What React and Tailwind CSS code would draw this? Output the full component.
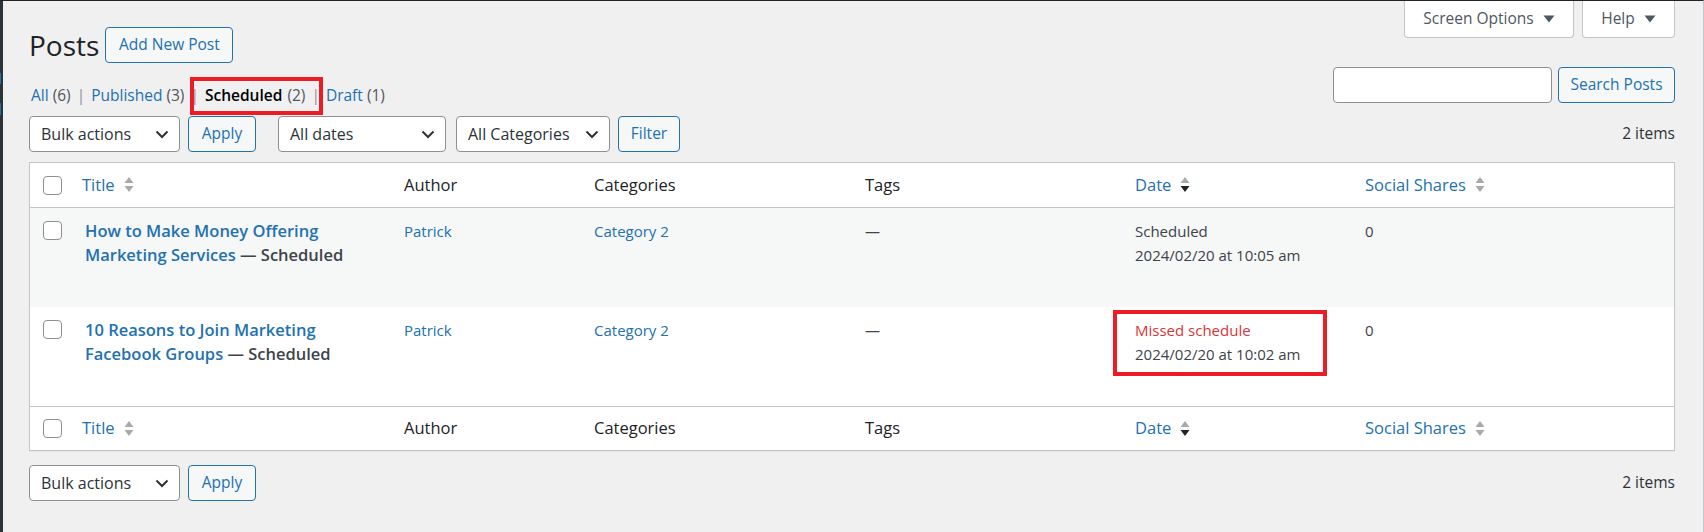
import React from 'react';

const font = { fontFamily: '"Open Sans", "Noto Sans", Arial, sans-serif' };

function SortArrows({ sorted }) {
  return (
    <svg width="10" height="18" viewBox="0 0 10 18" className="ml-[9px] shrink-0">
      <path d="M5 1 L9.5 7 L0.5 7 Z" fill="#a7aaad" />
      <path d="M0.5 10 L9.5 10 L5 16 Z" fill={sorted ? '#1d2327' : '#a7aaad'} />
    </svg>
  );
}

function Chevron() {
  return (
    <svg width="14" height="9" viewBox="0 0 14 9" className="shrink-0">
      <path d="M1.5 1.5 L7 7 L12.5 1.5" fill="none" stroke="#2c3338" strokeWidth="2" />
    </svg>
  );
}

function Caret() {
  return (
    <svg width="12" height="8" viewBox="0 0 12 8" className="shrink-0">
      <path d="M0.5 0.5 L11.5 0.5 L6 7.5 Z" fill="#50575e" />
    </svg>
  );
}

function Select({ label, width }) {
  return (
    <div
      className="h-[36px] flex items-center justify-between pl-[11px] pr-[10px] bg-white border border-[#8c8f94] rounded-[4px] text-[16px] text-[#2c3338]"
      style={{ width }}
    >
      <span>{label}</span>
      <Chevron />
    </div>
  );
}

function Button({ children, className = '' }) {
  return (
    <button
      className={`h-[36px] flex items-center justify-center border border-[#2271b1] bg-[#f6f7f7] rounded-[4px] text-[15.5px] text-[#2271b1] ${className}`}
    >
      {children}
    </button>
  );
}

function Checkbox() {
  return <span className="block w-[19px] h-[19px] bg-white border border-[#8c8f94] rounded-[4px]" />;
}

const cols = 'grid grid-cols-[42px_322px_190px_271px_270px_230px_1fr]';

function HeadRow({ className = '' }) {
  return (
    <div className={`${cols} items-center bg-white text-[16.5px] ${className}`}>
      <div className="pl-[13px]">
        <Checkbox />
      </div>
      <div className="pl-[10px] flex items-center text-[#2271b1]">
        Title
        <SortArrows />
      </div>
      <div className="pl-[10px] text-[#1d2327]">Author</div>
      <div className="pl-[10px] text-[#1d2327]">Categories</div>
      <div className="pl-[10px] text-[#1d2327]">Tags</div>
      <div className="pl-[10px] flex items-center text-[#2271b1]">
        Date
        <SortArrows sorted />
      </div>
      <div className="pl-[10px] flex items-center text-[#2271b1]">
        Social Shares
        <SortArrows />
      </div>
    </div>
  );
}

function PostRow({ title, status, date, missed, striped }) {
  return (
    <div className={`${cols} h-[99px] pt-[11px] text-[15px] leading-[24px] ${striped ? 'bg-[#f6f7f7]' : 'bg-white'}`}>
      <div className="pl-[13px] pt-[2px]">
        <Checkbox />
      </div>
      <div className="pl-[13px] pr-[20px] text-[16.5px] font-semibold">
        <span className="text-[#2271b1]">{title[0]}</span>
        <br />
        <span className="text-[#2271b1]">{title[1]}</span>
        <span className="text-[#3c434a]"> — Scheduled</span>
      </div>
      <div className="pl-[10px] text-[#2271b1]">Patrick</div>
      <div className="pl-[10px] text-[#2271b1]">Category 2</div>
      <div className="pl-[10px] text-[#3c434a]">—</div>
      <div className="pl-[10px] relative text-[#3c434a]">
        <div className={missed ? 'text-[#d63638]' : ''}>{status}</div>
        <div>{date}</div>
        {missed && (
          <div className="absolute left-[-12px] top-[-8px] w-[214px] h-[66px] border-4 border-[#ed1c24]" />
        )}
      </div>
      <div className="pl-[10px] text-[#3c434a]">0</div>
    </div>
  );
}

export default function App() {
  return (
    <div className="w-[1704px] h-[532px] flex bg-[#f0f0f1] border-t border-t-[#1d2327] border-r border-r-[#c3c4c7] overflow-hidden" style={font}>
      <div className="w-[3px] shrink-0 bg-[#2c3338] flex flex-col">
        <div className="h-[72px]" />
        <div className="w-[1px] h-[11px] bg-[#2271b1]" />
        <div className="h-[19px]" />
        <div className="w-[1px] h-[12px] bg-[#2271b1]" />
      </div>

      <div className="flex-1 pl-[26px] pr-[28px]">
        {/* heading + screen meta tabs */}
        <div className="flex justify-between items-start">
          <div className="flex items-center pt-[26px]">
            <h1 className="text-[28px] leading-[36px] text-[#1d2327] mr-[6px]">Posts</h1>
            <Button className="w-[128px]">Add New Post</Button>
          </div>
          <div className="flex gap-[8px]">
            <div className="w-[170px] h-[37px] flex items-center justify-center gap-[9px] bg-white border border-t-0 border-[#c3c4c7] rounded-b-[4px] text-[15.5px] text-[#50575e]">
              Screen Options <Caret />
            </div>
            <div className="w-[93px] h-[37px] flex items-center justify-center gap-[9px] bg-white border border-t-0 border-[#c3c4c7] rounded-b-[4px] text-[15.5px] text-[#50575e]">
              Help <Caret />
            </div>
          </div>
        </div>

        {/* status links + search */}
        <div className="flex justify-between items-start h-[36px] mt-[4px]">
          <div className="flex items-center ml-[2px] mt-[17px] leading-[22px] text-[15.5px] text-[#50575e]">
            <span className="text-[#2271b1]">All <span className="text-[#50575e]">(6)</span></span>
            <span className="mx-[6px] text-[#8c8f94]">|</span>
            <span className="text-[#2271b1]">Published <span className="text-[#50575e]">(3)</span></span>
            <span className="relative flex items-center">
              <span className="mx-[6px] text-[#8c8f94]">|</span>
              <span className="font-semibold text-black">Scheduled</span>
              <span className="ml-[5px]">(2)</span>
              <span className="mx-[6px] text-[#8c8f94]">|</span>
              <span className="absolute left-[6px] right-[3px] top-[-7px] bottom-[-9px] border-4 border-[#ed1c24]" />
            </span>
            <span className="text-[#2271b1]">Draft <span className="text-[#50575e]">(1)</span></span>
          </div>
          <div className="flex gap-[6px]">
            <div className="w-[219px] h-[36px] bg-white border border-[#8c8f94] rounded-[4px]" />
            <Button className="w-[117px]">Search Posts</Button>
          </div>
        </div>

        {/* top tablenav */}
        <div className="flex items-center h-[36px] mt-[13px]">
          <Select label="Bulk actions" width={151} />
          <Button className="w-[68px] ml-[8px]">Apply</Button>
          <div className="ml-[22px]">
            <Select label="All dates" width={168} />
          </div>
          <div className="ml-[10px]">
            <Select label="All Categories" width={154} />
          </div>
          <Button className="w-[62px] ml-[8px]">Filter</Button>
          <span className="ml-auto text-[15.5px] text-[#2c3338]">2 items</span>
        </div>

        {/* list table */}
        <div className="mt-[10px] border border-[#c3c4c7] bg-white shadow-[0_1px_1px_rgba(0,0,0,0.04)]">
          <HeadRow className="h-[45px] border-b border-[#c3c4c7]" />
          <PostRow
            title={['How to Make Money Offering', 'Marketing Services']}
            status="Scheduled"
            date="2024/02/20 at 10:05 am"
            striped
          />
          <PostRow
            title={['10 Reasons to Join Marketing', 'Facebook Groups']}
            status="Missed schedule"
            date="2024/02/20 at 10:02 am"
            missed
          />
          <HeadRow className="h-[44px] border-t border-[#c3c4c7]" />
        </div>

        {/* bottom tablenav */}
        <div className="flex items-center h-[36px] mt-[14px]">
          <Select label="Bulk actions" width={151} />
          <Button className="w-[68px] ml-[8px]">Apply</Button>
          <span className="ml-auto text-[15.5px] text-[#2c3338]">2 items</span>
        </div>
      </div>
    </div>
  );
}
